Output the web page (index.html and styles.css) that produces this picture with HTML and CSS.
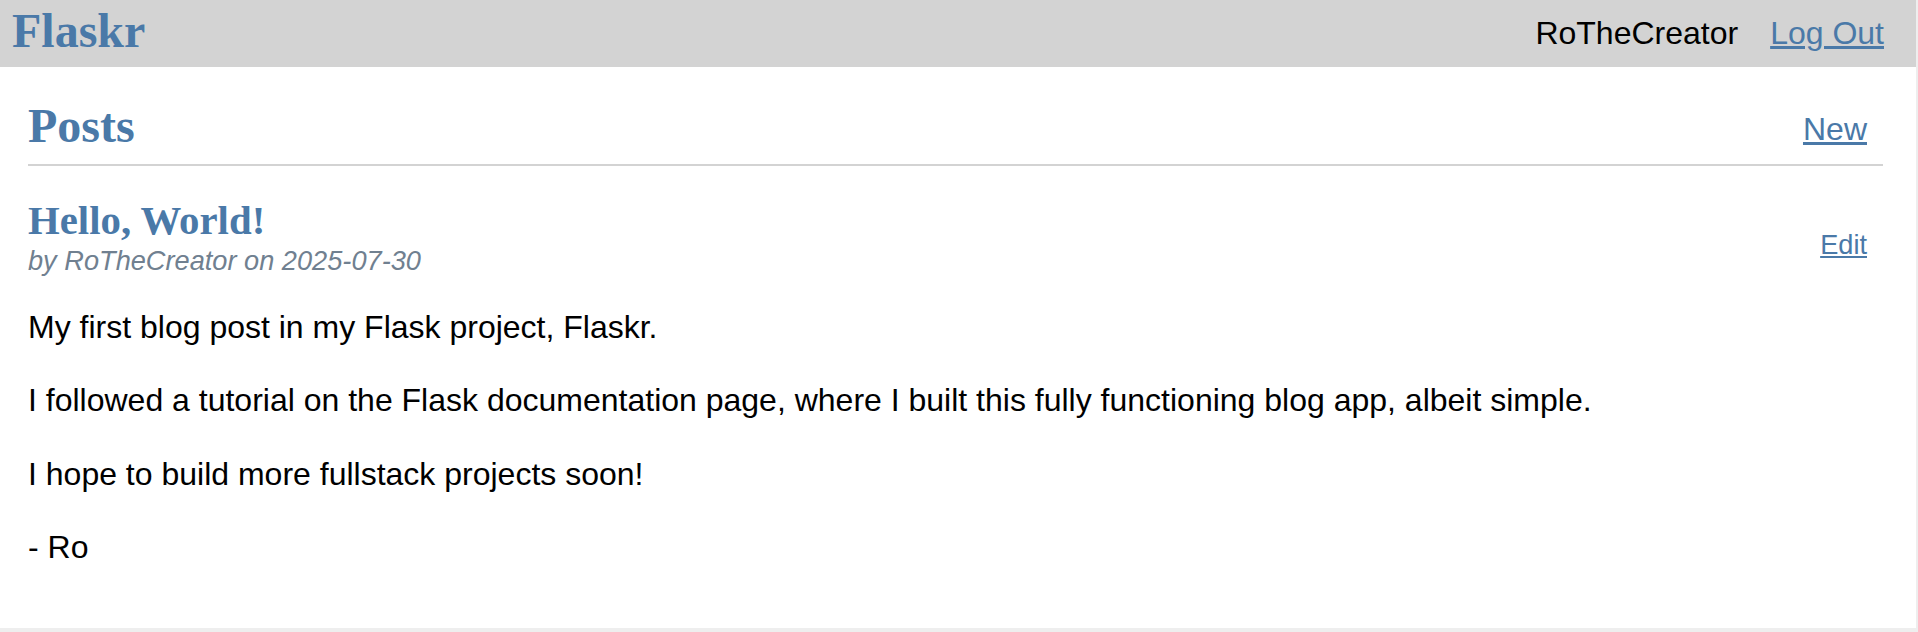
FILE: index.html
```html
<!DOCTYPE html>
<html lang="en">
<head>
<meta charset="utf-8">
<title>Posts - Flaskr</title>
<link rel="stylesheet" href="styles.css">
</head>
<body>
<div class="page">
  <nav class="topnav">
    <h1 class="brand"><a href="#">Flaskr</a></h1>
    <ul class="navlist">
      <li><span>RoTheCreator</span></li>
      <li><a href="#">Log Out</a></li>
    </ul>
  </nav>
  <section class="content">
    <header class="page-header">
      <h1 class="page-title">Posts</h1>
      <a class="action" href="#">New</a>
    </header>
    <article class="post">
      <header class="post-header">
        <div class="post-meta">
          <h1 class="post-title">Hello, World!</h1>
          <div class="about">by RoTheCreator on 2025-07-30</div>
        </div>
        <a class="action" href="#">Edit</a>
      </header>
      <p class="body">My first blog post in my Flask project, Flaskr.

I followed a tutorial on the Flask documentation page, where I built this fully functioning blog app, albeit simple.

I hope to build more fullstack projects soon!

- Ro</p>
    </article>
  </section>
</div>
</body>
</html>
```

FILE: styles.css
```css
html {
  background: #eeeeee;
}

body {
  margin: 0;
  font-family: "Liberation Sans", Arial, Helvetica, sans-serif;
  font-size: 32px;
  color: #000;
}

.page {
  width: 1916px;
  height: 628px;
  background: #ffffff;
  overflow: hidden;
}

a {
  color: #4a79a8;
}

h1 {
  font-family: "Liberation Serif", "Times New Roman", serif;
  font-weight: bold;
  font-size: 48px;
  color: #4a79a8;
}

.topnav {
  background: #d3d3d3;
  display: flex;
  align-items: center;
  padding: 0 16px 0 12px;
}

.brand {
  flex: auto;
  margin: 0 0 6px 0;
}

.brand a {
  text-decoration: none;
}

.navlist {
  display: flex;
  list-style: none;
  margin: 0;
  padding: 0;
  line-height: 34.7px;
}

.navlist li a,
.navlist li span,
.action {
  display: block;
  padding: 16px;
}

.content {
  padding: 0 33px 0 28px;
}

.page-header {
  display: flex;
  align-items: flex-end;
  border-bottom: 2px solid #d3d3d3;
}

.page-title {
  flex: auto;
  margin: 31px 0 11px 0;
}

.post-header {
  display: flex;
  align-items: flex-end;
  font-size: 27.2px;
}

.post-meta {
  flex: auto;
}

.post-title {
  font-size: 40.8px;
  margin: 31px 0 1px 0;
}

.about {
  color: #708090;
  font-style: italic;
}

.body {
  white-space: pre-line;
  line-height: 36.8px;
  margin: 32px 0 0 0;
}
```
